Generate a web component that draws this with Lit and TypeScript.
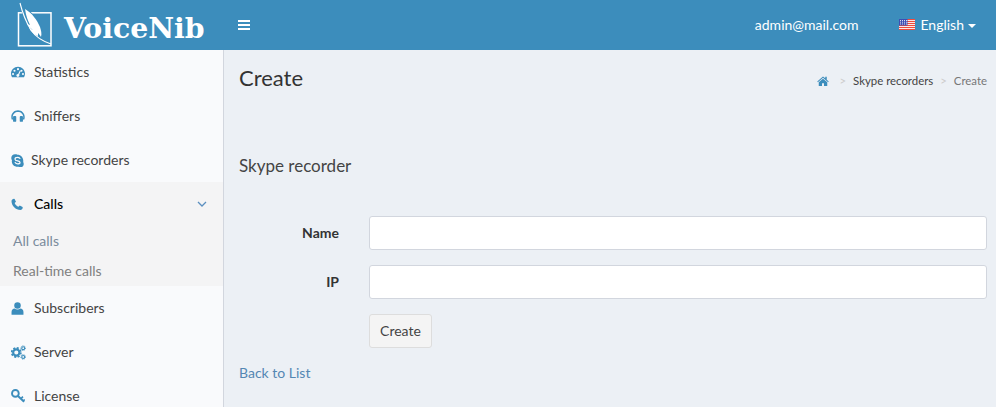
import { LitElement, html, css, svg } from "lit";
import { customElement } from "lit/decorators.js";

const icons: Record<string, any> = {
  dash: svg`<path fill-rule="evenodd" d="M12 3C5.400 3 0 8.400 0 15c0 2.200.6 4.200 1.700 6h20.600c1.100-1.800 1.700-3.800 1.700-6C24 8.400 18.600 3 12 3zM12 5.300a1.800 1.800 0 1 1 0 3.600 1.800 1.800 0 0 1 0-3.600zM6 8a1.800 1.800 0 1 1 0 3.600A1.800 1.800 0 0 1 6 8zM3.500 13.500a1.800 1.800 0 1 1 0 3.600 1.800 1.800 0 0 1 0-3.600zM20.500 13.500a1.800 1.800 0 1 1 0 3.600 1.800 1.800 0 0 1 0-3.600zM18 8a1.800 1.800 0 1 1 0 3.600A1.800 1.800 0 0 1 18 8zM15.200 9.500l1.400.6-2.600 6.400a2.600 2.600 0 1 1-4.300-.1c.7-.7 1.600-1 2.600-.9z"/>`,
  head: svg`<path d="M12 2C5.600 2 .500 7 .500 13.500c0 1.700.3 3.300 1 4.800l2.300-.9C3.300 16.200 3 15 3 13.700 3 8.500 7 5 12 5s9 3.500 9 8.700c0 1.300-.3 2.500-.8 3.700l2.300.9c.7-1.500 1-3.100 1-4.800C23.500 7 18.400 2 12 2z"/><rect x="3.500" y="12" width="5.500" height="10" rx="1.500"/><rect x="15" y="12" width="5.500" height="10" rx="1.500"/>`,
  skype: svg`<path d="M12 1.500c-1.200-1-2.700-1-4.500-1C3.600.5.500 3.700.500 7.500c0 1.500.4 3 1.300 4.200-.2.900-.3 1.600-.3 2.300 0 5.500 4.500 9.700 10.500 9.700.8 0 1.500-.1 2.200-.2 1.200.8 2.500 1 3.800 1 3.500 0 5.500-3 5.500-6 0-1.300-.3-2.500-1-3.700.1-.6.200-1.200.2-1.800C22.700 6.500 18 1.500 12 1.500z"/><path d="M16.500 8.300C15.500 6.800 14 6.200 12 6.200c-2.800 0-4.600 1.300-4.600 3.300 0 4.300 9.300 2.300 9.300 6 0 1.500-1.800 2.600-4.300 2.600-2.200 0-3.700-.8-4.700-2.500" fill="none" stroke="#f9fafc" stroke-width="2.200" stroke-linecap="round"/>`,
  phone: svg`<path d="M1 6c0-2 2.500-4.500 5-4.500l1.200.4 2.800 5.600-2.700 2.700c1 3 4.500 6.500 7.500 7.500l2.700-2.700 5.600 2.800.4 1.200c0 2.500-2.500 5-4.500 5C9.500 24 1 15.500 1 6z"/>`,
  user: svg`<circle cx="12" cy="6.500" r="6"/><path d="M1 23.500v-5c0-3.800 2.500-6.500 5.800-6.500 1.500 1.200 3.200 1.800 5.200 1.800s3.700-.6 5.200-1.800c3.300 0 5.800 2.700 5.800 6.500v5z"/>`,
  cogs: svg`<circle cx="8.500" cy="12" r="5" fill="none" stroke-width="3.400" stroke="#3c8dbc"/><circle cx="8.500" cy="12" r="7.300" fill="none" stroke-width="2.800" stroke="#3c8dbc" stroke-dasharray="3.300 2.400"/><circle cx="19.500" cy="5" r="2.300" fill="none" stroke-width="1.800" stroke="#3c8dbc"/><circle cx="19.500" cy="5" r="3.700" fill="none" stroke-width="1.500" stroke="#3c8dbc" stroke-dasharray="1.500 1.400"/><circle cx="19.500" cy="19" r="2.300" fill="none" stroke-width="1.800" stroke="#3c8dbc"/><circle cx="19.500" cy="19" r="3.700" fill="none" stroke-width="1.500" stroke="#3c8dbc" stroke-dasharray="1.500 1.400"/>`,
  key: svg`<circle cx="7.500" cy="7.500" r="5.800" fill="none" stroke="#3c8dbc" stroke-width="3.200"/><path d="M11.500 11.500L22.500 22" fill="none" stroke="#3c8dbc" stroke-width="3.400"/><path d="M17 16.500l3.500-3.500M21 20.500l2.500-2.500" fill="none" stroke="#3c8dbc" stroke-width="2.800"/>`,
  home: svg`<path d="M12 3L.5 12.800l1.300 1.500L12 5.700l10.200 8.600 1.300-1.500-4-3.400V3.500h-3v3.200z"/><path d="M12 7.500L3.500 14.500V22H10v-5.500h4V22h6.500v-7.500z"/>`,
};

const icon = (name: string, cls = "ic") =>
  html`<svg class=${cls} viewBox="0 0 24 24" aria-hidden="true">${icons[name]}</svg>`;

@customElement("app-root")
export class AppRoot extends LitElement {
  static styles = css`
    :host {
      display: block;
      width: 996px;
      height: 407px;
      overflow: hidden;
      font-family: "Lato", "Noto Sans", sans-serif;
      font-size: 14px;
      line-height: 20px;
      color: #333;
      background: #ecf0f5;
    }
    .top {
      height: 50px;
      background: #3c8dbc;
      color: #fff;
      display: flex;
      align-items: center;
    }
    .brand {
      width: 223px;
      height: 50px;
      display: flex;
      align-items: center;
      flex: none;
    }
    .mark { width: 56px; height: 50px; margin-left: 8px; flex: none; }
    .name {
      font-family: "DejaVu Serif", serif;
      font-weight: 700;
      font-size: 28.300px;
      margin-top: 5px;
    }
    .bars {
      margin-left: 15px;
      width: 12px;
      display: flex;
      flex-direction: column;
      gap: 2px;
    }
    .bars i { display: block; height: 2px; background: #fff; }
    .user { margin-left: auto; }
    .lang {
      display: flex;
      align-items: center;
      margin-left: 41px;
      margin-right: 20px;
    }
    .flag { width: 16px; height: 11px; margin-right: 5px; margin-top: -2px; }
    .caret {
      margin-left: 4px;
      margin-top: 2px;
      border-top: 4px solid #fff;
      border-left: 4px solid transparent;
      border-right: 4px solid transparent;
    }
    .main { display: flex; height: 357px; }
    .side {
      width: 223px;
      flex: none;
      background: #f9fafc;
      border-right: 1px solid #d2d6de;
    }
    .item {
      height: 44px;
      display: flex;
      align-items: center;
      padding-left: 11px;
      color: #444;
    }
    .ic {
      width: 14px;
      height: 14px;
      fill: #3c8dbc;
      flex: none;
      margin-right: 9px;
    }
    .item.skype .ic { width: 13px; height: 13px; margin-right: 7px; }
    .item.phone .ic { width: 12px; height: 12px; margin-right: 11px; }
    .item.user .ic { width: 13px; height: 13px; margin-right: 10px; }
    .item.cogs .ic { width: 15px; height: 15px; margin-right: 8px; }
    .group { background: #f4f4f5; }
    .item.on { color: #000; font-weight: 500; }
    .chev { margin-left: auto; margin-right: 16px; width: 10px; height: 6px; fill: none; stroke: #5b8fc0; stroke-width: 1.300; }
    .sub {
      height: 30px;
      line-height: 30px;
      padding-left: 13px;
      color: #7a8b9c;
    }
    .sub.b { color: #808080; }
    .content { flex: 1; padding: 0 9px 0 15px; min-width: 0; }
    .phead { height: 55px; display: flex; align-items: center; justify-content: space-between; }
    h1 { margin: 0; font-size: 22px; font-weight: 400; color: #333; line-height: 28px; }
    .crumb {
      display: flex;
      align-items: center;
      font-size: 11.400px;
      margin-top: 7px;
      color: #444;
    }
    .crumb .ic { width: 12px; height: 12px; margin-right: 0; }
    .crumb .sep { color: #ccc; margin: 0 7px; }
    .crumb .sep.first { margin-left: 10px; }
    .crumb .cur { color: #777; }
    h4 { margin: 51px 0 0; font-size: 17px; font-weight: 400; color: #444; line-height: 20px; }
    form {
      margin: 40px 0 0;
      display: grid;
      grid-template-columns: 100px 1fr;
      column-gap: 30px;
      row-gap: 15px;
      align-items: center;
    }
    label { text-align: right; font-weight: 700; }
    input {
      height: 34px;
      box-sizing: border-box;
      width: 100%;
      border: 1px solid #d2d6de;
      border-radius: 3px;
      background: #fff;
      display: block;
    }
    button {
      grid-column: 2;
      justify-self: start;
      width: 63px;
      height: 34px;
      border: 1px solid #ddd;
      border-radius: 3px;
      background: #f4f4f4;
      color: #444;
      font: inherit;
      padding: 0;
    }
    .back { display: block; margin-top: 15px; color: #5487b3; text-decoration: none; }
  `;

  render() {
    return html`
      <div class="top">
        <div class="brand">
          <svg class="mark" viewBox="8 0 56 50" aria-hidden="true">
            <rect x="18.500" y="12.800" width="32.500" height="33" fill="none" stroke="#fff" stroke-width="1.500" />
            <path d="M19 2l7 6c7 5 13 13 16 21 1 3 1 8 0 10-6-1-12-5-15-11C24 20 21 10 19 2z" fill="#3c8dbc" />
            <path d="M25 9c7 4 12 11 15 18 1 3 2 7 1 10-1-2-2-3-3-4l0 3c-3-1-7-4-9-8l4 2c-3-2-5-4-6-6l3 1c-2-4-4-9-5-16z" fill="#fff" />
            <path d="M20 3c2 8 6 19 11 27 4 6 11 11 20 14" fill="none" stroke="#fff" stroke-width="1.100" />
          </svg>
          <span class="name">VoiceNib</span>
        </div>
        <div class="bars"><i></i><i></i><i></i></div>
        <span class="user">admin@mail.com</span>
        <div class="lang">
          <svg class="flag" viewBox="0 0 16 11" aria-hidden="true">
            <rect width="16" height="11" fill="#fbe9e7" />
            <path d="M0 .5h16M0 2.500h16M0 4.500h16M0 6.500h16M0 8.500h16M0 10.500h16" stroke="#ef4b3c" stroke-width="1" />
            <rect width="8.500" height="6.500" fill="#3d4fb5" />
            <path d="M1 1.500h7M1 3.200h7M1 5h7" stroke="#fff" stroke-width=".8" stroke-dasharray="1 1" />
          </svg>
          English<span class="caret"></span>
        </div>
      </div>
      <div class="main">
        <nav class="side">
          <div class="item">${icon("dash")}Statistics</div>
          <div class="item">${icon("head")}Sniffers</div>
          <div class="item skype">${icon("skype")}Skype recorders</div>
          <div class="group">
            <div class="item on phone">${icon("phone")}Calls
              <svg class="chev" viewBox="0 0 10 6" aria-hidden="true"><path d="M1 1l4 4 4-4" /></svg>
            </div>
            <div class="sub">All calls</div>
            <div class="sub b">Real-time calls</div>
          </div>
          <div class="item user">${icon("user")}Subscribers</div>
          <div class="item cogs">${icon("cogs")}Server</div>
          <div class="item">${icon("key")}License</div>
        </nav>
        <section class="content">
          <div class="phead">
            <h1>Create</h1>
            <div class="crumb">
              ${icon("home")}<span class="sep first">&gt;</span><span>Skype recorders</span><span class="sep">&gt;</span><span class="cur">Create</span>
            </div>
          </div>
          <h4>Skype recorder</h4>
          <form>
            <label>Name</label><input type="text" />
            <label>IP</label><input type="text" />
            <button type="button">Create</button>
          </form>
          <a class="back" href="#">Back to List</a>
        </section>
      </div>
    `;
  }
}
